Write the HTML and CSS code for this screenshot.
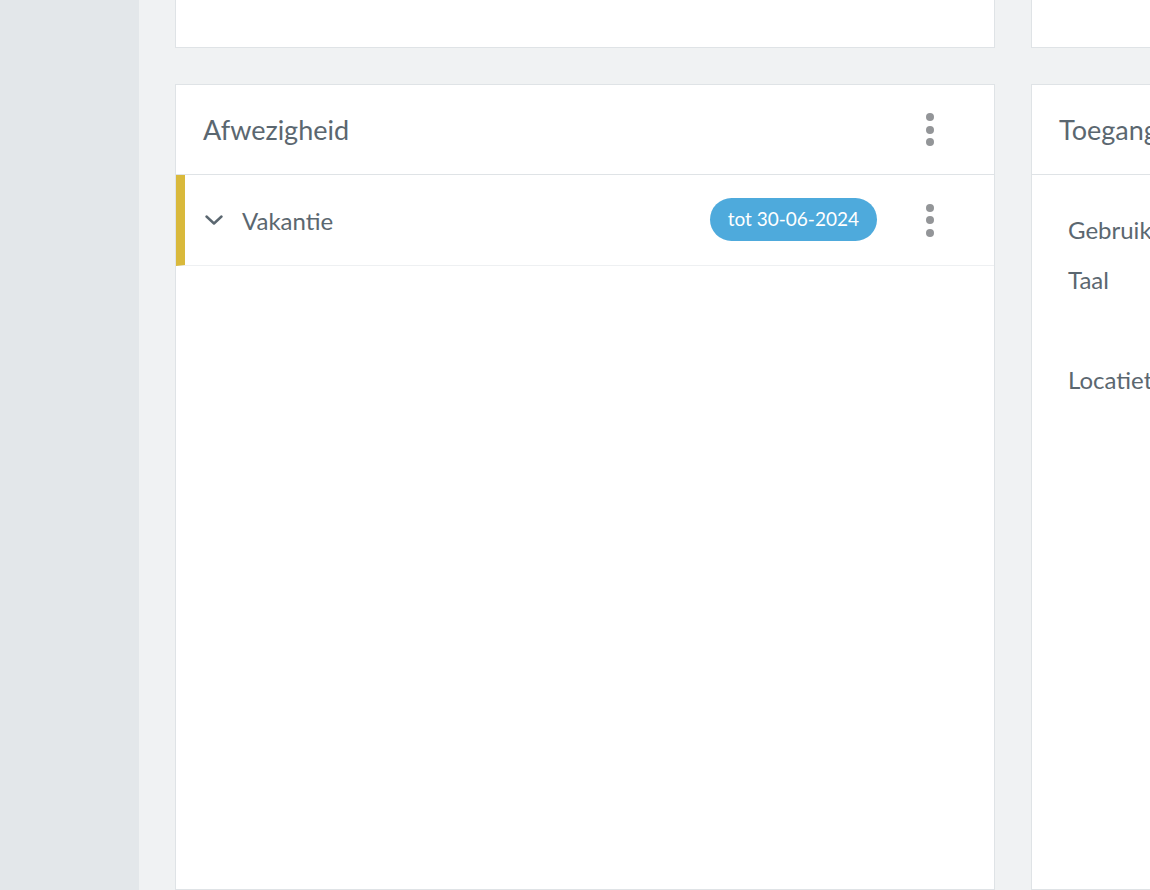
FILE: index.html
```html
<!DOCTYPE html>
<html lang="nl">
<head>
  <meta charset="UTF-8" />
  <meta name="viewport" content="width=device-width, initial-scale=1.0"/>
  <title>Medewerker</title>
  <link rel="stylesheet" href="styles.css">
</head>
<body>

  <aside class="sidebar"></aside>

  <main class="content">
    <div class="column">
      <div class="card card-cut"></div>

      <section class="card card-fill">
        <div class="card-header">
          <h2>Afwezigheid</h2>
          <button class="kebab" aria-label="Meer opties"><span></span><span></span><span></span></button>
        </div>
        <div class="absence-row">
          <svg class="chevron" width="18" height="10" viewBox="0 0 18 10"><path d="M1.5 1.5 L9 8.5 L16.5 1.5" fill="none" stroke="currentColor" stroke-width="2.4" stroke-linecap="round" stroke-linejoin="round"/></svg>
          <span class="absence-name">Vakantie</span>
          <span class="badge">tot 30-06-2024</span>
          <button class="kebab" aria-label="Meer opties"><span></span><span></span><span></span></button>
        </div>
      </section>
    </div>

    <div class="column">
      <div class="card card-cut"></div>

      <section class="card card-fill">
        <div class="card-header">
          <h2>Toegang</h2>
        </div>
        <dl class="details">
          <dt>Gebruikersnaam</dt>
          <dt class="tall">Taal</dt>
          <dt>Locatietoegang</dt>
        </dl>
      </section>
    </div>
  </main>

</body>
</html>
```

FILE: styles.css
```css
* {
  box-sizing: border-box;
}

body {
  margin: 0;
  height: 100vh;
  display: flex;
  overflow: hidden;
  font-family: "Lato", "Noto Sans", sans-serif;
  color: #5b6770;
  background-color: #f0f2f3;
}

.sidebar {
  width: 139px;
  flex: none;
  background-color: #e3e7ea;
}

.content {
  flex: 1;
  display: flex;
  gap: 36px;
  padding-left: 36px;
  overflow: hidden;
}

.column {
  width: 820px;
  flex: none;
  display: flex;
  flex-direction: column;
  gap: 36px;
}

.card {
  background-color: #fff;
  border: 1px solid #dfe3e6;
}

.card-cut {
  height: 48px;
  border-top: none;
}

.card-fill {
  flex: 1;
}

.card-header {
  height: 90px;
  display: flex;
  align-items: center;
  justify-content: space-between;
  padding: 0 50px 0 27px;
  border-bottom: 1px solid #dfe3e6;
}

.card-header h2 {
  margin: 0;
  font-size: 27px;
  font-weight: 400;
}

.kebab {
  width: 28px;
  height: 36px;
  padding: 0;
  border: none;
  background: none;
  display: flex;
  flex-direction: column;
  align-items: center;
  justify-content: center;
  gap: 4.5px;
  cursor: pointer;
}

.kebab span {
  width: 8px;
  height: 8px;
  border-radius: 50%;
  background-color: #939598;
}

.absence-row {
  height: 91px;
  display: flex;
  align-items: center;
  padding: 0 50px 0 20px;
  border-left: 9px solid #d9b93b;
  border-bottom: 1px solid #eef0f2;
}

.chevron {
  color: #5b6770;
  margin-right: 19px;
}

.absence-name {
  flex: 1;
  font-size: 24px;
}

.badge {
  height: 43px;
  line-height: 42px;
  padding: 0 18px;
  margin: -2px 39px 0 0;
  border-radius: 22px;
  background-color: #4eaadc;
  color: #fff;
  font-size: 19px;
}

.details {
  margin: 0;
  padding: 40px 36px;
}

.details dt {
  height: 50px;
  font-size: 24px;
}

.details dt.tall {
  height: 100px;
}
```
